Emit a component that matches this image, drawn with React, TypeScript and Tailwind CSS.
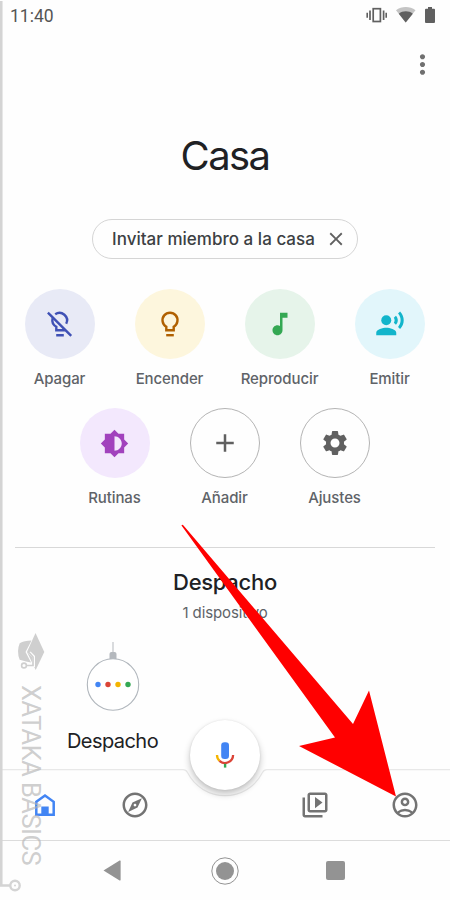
import type { ReactNode } from 'react';
import {
    MdAdd,
    MdBrightnessMedium,
    MdClose,
    MdMoreVert,
    MdMusicNote,
    MdOutlineAccountCircle,
    MdOutlineExplore,
    MdOutlineVideoLibrary,
    MdRecordVoiceOver,
    MdSettings,
} from 'react-icons/md';

const BulbIcon = () => (
    <svg width="30" height="30" viewBox="0 0 30 30" fill="none" stroke="currentColor" strokeWidth="2.4">
        <path d="M11.3 21.3v-3.6a7.5 7.5 0 1 1 7.4 0v3.6z" />
        <path d="M11.2 26.2h7.6" />
    </svg>
);

const BulbOffIcon = () => (
    <svg width="30" height="30" viewBox="0 0 30 30" fill="none" stroke="currentColor" strokeWidth="2.4">
        <path d="M10.2 5.3a7.5 7.5 0 0 1 11 9.5M7.6 9.4a7.5 7.5 0 0 0 3.7 8.3v3.6h7.4v-2" />
        <path d="M11.2 26.2h7.6M2.9 3.6l23.3 23.3" />
    </svg>
);

const HomeIcon = () => (
    <svg width="30" height="30" viewBox="0 0 30 30" fill="none">
        <path d="M6.3 11.8 15 5.5l8.7 6.3v12.9H6.3z" stroke="#4285f4" strokeWidth="2.5" />
        <path d="M11.3 16.5h7.4v8h-7.4z" fill="#4285f4" />
    </svg>
);

const MicIcon = () => (
    <svg width="30" height="30" viewBox="0 0 30 30" fill="none">
        <rect x="11.2" y="2.2" width="7.8" height="16.8" rx="3.3" fill="#4285f4" />
        <path d="M7 15c0 2.4 1 4.5 2.6 5.9" stroke="#f4b400" strokeWidth="2.3" />
        <path d="M9.5 20.8a8.1 8.1 0 0 0 13.600-5.800" stroke="#db4437" strokeWidth="2.3" />
        <path d="M15.1 23.8v3.8" stroke="#34a853" strokeWidth="2.4" />
    </svg>
);

const StatusBar = () => (
    <header className="flex h-8 items-center justify-between pr-[15px] pl-[10px]">
        <span className="font-[Roboto,sans-serif] text-[17.5px] leading-8 text-[#555]">11:40</span>
        <div className="flex h-full items-start gap-[9px] pt-[7px]">
            <svg width="21" height="16" viewBox="0 0 21 16" fill="none" stroke="#606060">
                <rect x="7.2" y="1.7" width="7.2" height="12.8" strokeWidth="1.7" />
                <path d="M4 3.5v9.500M17.600 3.500v9.500" strokeWidth="1.7" />
                <path d="M1.200 5.800v5M20.200 5.800v5" strokeWidth="1.600" />
            </svg>
            <svg width="20" height="16" viewBox="0 0 20 16">
                <path d="M0 3.200C5.500-1 14-1 19.500 3.200L9.700 15.500z" fill="#c4c4c4" />
                <path d="M2.800 6.700c4.200-3.200 9.800-3.200 14 0l-7.100 8.800z" fill="#606060" />
            </svg>
            <svg width="10" height="16" viewBox="0 0 10 16" fill="#606060">
                <path d="M3 0h4v1.700h2q1 0 1 1V15q0 1-1 1H1q-1 0-1-1V2.700q0-1 1-1h2z" />
            </svg>
        </div>
    </header>
);

type ActionProps = {
    label: string;
    circle: string;
    children: ReactNode;
};

const Action = ({ label, circle, children }: ActionProps) => (
    <button className="flex w-[110px] flex-col items-center">
        <span className={`flex size-[70px] items-center justify-center rounded-full ${circle}`}>{children}</span>
        <span className="mt-[10px] text-[15px] leading-5 font-medium tracking-[-0.1px] text-[#5f6368]">{label}</span>
    </button>
);

const DeviceIcon = () => (
    <svg width="54" height="70" viewBox="0 0 54 70" fill="none">
        <path d="M27 0v11" stroke="#b4b8bd" />
        <path d="M23.5 17v-5q0-2 2-2h3q2 0 2 2v5z" fill="#b4b8bd" />
        <circle cx="27" cy="42.5" r="25.7" fill="#fff" stroke="#b0b6bc" strokeWidth="1.1" />
        <circle cx="12" cy="42.5" r="2.7" fill="#4285f4" />
        <circle cx="22" cy="42.5" r="2.7" fill="#db4437" />
        <circle cx="32" cy="42.5" r="2.7" fill="#f4b400" />
        <circle cx="42" cy="42.5" r="2.7" fill="#34a853" />
    </svg>
);

const TabBar = () => (
    <nav className="relative h-[72px] border-b border-[#dcdcdc]">
        {/* top edge dips around the microphone button */}
        <svg className="absolute top-0 left-0" width="450" height="32" viewBox="0 0 450 32" fill="none">
            <path d="M0 .6h183q3 0 4.500 3a42 42 0 0 0 75 0q1.500-3 4.500-3h183" stroke="#e8e8e8" strokeWidth="1.2" />
        </svg>
        <button className="absolute -top-[49px] left-[190px] flex size-[70px] items-center justify-center rounded-full bg-white shadow-[0_4px_7px_rgba(0,0,0,0.24),0_0_2px_rgba(0,0,0,0.1)]">
            <MicIcon />
        </button>
        <div className="grid h-[71px] grid-cols-5 place-items-center text-[#737373]">
            <HomeIcon />
            <MdOutlineExplore size={30} />
            <span />
            <MdOutlineVideoLibrary size={30} />
            <MdOutlineAccountCircle size={30} />
        </div>
    </nav>
);

const SystemNav = () => (
    <footer className="flex h-[59px] items-center pl-[103px]">
        <svg width="18" height="21" viewBox="0 0 18 21" fill="#939393">
            <path d="M.5 10.500 16.600.600q1-.500 1 .600v18.600q0 1.100-1 .600z" />
        </svg>
        <svg className="ml-[90px]" width="28" height="28" viewBox="0 0 28 28">
            <circle cx="14" cy="14" r="13.2" fill="none" stroke="#939393" />
            <circle cx="14" cy="14" r="9" fill="#939393" />
        </svg>
        <span className="ml-[87px] size-[19px] rounded-[2px] bg-[#939393]" />
    </footer>
);

const Watermark = () => (
    <div className="pointer-events-none absolute inset-0">
        <svg className="absolute inset-0" width="60" height="900" viewBox="0 0 60 900" fill="none">
            <path d="M1.2 1v884.500H10" stroke="#d4d4d4" strokeWidth="2.7" />
            <circle cx="15" cy="885.500" r="4.700" stroke="#d4d4d4" strokeWidth="2.400" />
            <circle cx="15" cy="885.500" r="1" fill="#d4d4d4" />
            {/* graduation cap lying on its side */}
            <path d="M31.500 640.500 25.500 652l5.500 10.500-5-1-6.300-1.800q-3.400-8.500 0-16.500 4.500-2.700 11.800-2.700z" fill="#cfcfcf" />
            <path d="M35.500 633 44.300 652 35.700 670 27 652z" fill="#cfcfcf" />
            <path d="M26.500 665.500h7v-9l-4-4" stroke="#fefefe" strokeWidth="3" />
            <circle cx="24" cy="665.500" r="2.400" stroke="#cfcfcf" strokeWidth="1.600" fill="#fefefe" />
            <path d="M26.500 665.500h6.500v-8.500l-4-4.500" stroke="#cfcfcf" strokeWidth="1.700" />
        </svg>
        <span className="absolute top-[685px] left-[18px] h-[181px] w-[26px] font-[Roboto,sans-serif] text-[25.5px] leading-[26px] tracking-[-0.55px] whitespace-nowrap text-[#b4b4b4]/65 [writing-mode:vertical-rl]">
            XATAKA BASICS
        </span>
    </div>
);

export default function App() {
    return (
        <div className="relative flex h-[900px] w-[450px] flex-col overflow-hidden bg-[#fefefe] font-[Inter,sans-serif]">
            <StatusBar />
            <div className="flex h-[66px] justify-end pt-[17px] pr-[12px] text-[#707070]">
                <MdMoreVert size={31} />
            </div>
            <h1 className="h-[121px] pt-[33px] text-center text-[40px] leading-[50px] tracking-[-1.6px] text-[#202124]">
                Casa
            </h1>
            <div className="mx-auto flex h-10 w-[266px] items-center justify-between rounded-full border border-[#d5d5d5] pr-[10px] pl-[19px]">
                <span className="pt-[2px] text-[17px] font-medium tracking-[0.02px] whitespace-nowrap text-[#3c4043]">
                    Invitar miembro a la casa
                </span>
                <MdClose className="shrink-0 text-[#606060]" size={22} />
            </div>

            <div className="mt-[30px] mr-[1px] flex justify-center">
                <Action label="Apagar" circle="bg-[#e8eaf6] text-[#3f51b5]">
                    <BulbOffIcon />
                </Action>
                <Action label="Encender" circle="bg-[#fdf6dd] text-[#b06000]">
                    <BulbIcon />
                </Action>
                <Action label="Reproducir" circle="bg-[#e6f4ea] text-[#34a853]">
                    <MdMusicNote size={30} />
                </Action>
                <Action label="Emitir" circle="bg-[#e2f6fb] text-[#12b5cb]">
                    <MdRecordVoiceOver size={30} />
                </Action>
            </div>
            <div className="mt-[19px] mr-[1px] flex justify-center">
                <Action label="Rutinas" circle="bg-[#f3e8fd] text-[#a142bd]">
                    <MdBrightnessMedium size={29} />
                </Action>
                <Action label="Añadir" circle="border border-[#b4b4b4] text-[#606060]">
                    <MdAdd size={30} />
                </Action>
                <Action label="Ajustes" circle="border border-[#b4b4b4] text-[#606060]">
                    <MdSettings size={30} />
                </Action>
            </div>

            <section className="mx-[15px] mt-[39px] flex h-[95px] flex-col items-center border-t border-[#d8d8d8] pt-[19px]">
                <h2 className="text-[22px] leading-[30px] font-medium tracking-[-0.3px] text-[#202124]">Despacho</h2>
                <p className="mt-[6px] text-[15px] leading-5 tracking-[-0.1px] text-[#5f6368]">1 dispositivo</p>
            </section>
            <div className="flex h-[127px] w-[225px] flex-col items-center">
                <DeviceIcon />
                <span className="mt-[15px] text-[20px] leading-7 tracking-[-0.55px] text-[#202124]">Despacho</span>
            </div>

            <TabBar />
            <SystemNav />

            <Watermark />
            <svg className="pointer-events-none absolute inset-0" width="450" height="900" viewBox="0 0 450 900">
                <path d="M181.500 525.500q.5-1.500 2 0L353 724l16-33.500 27 106-97-50.500 36-8.500z" fill="#f00" />
            </svg>
        </div>
    );
}
